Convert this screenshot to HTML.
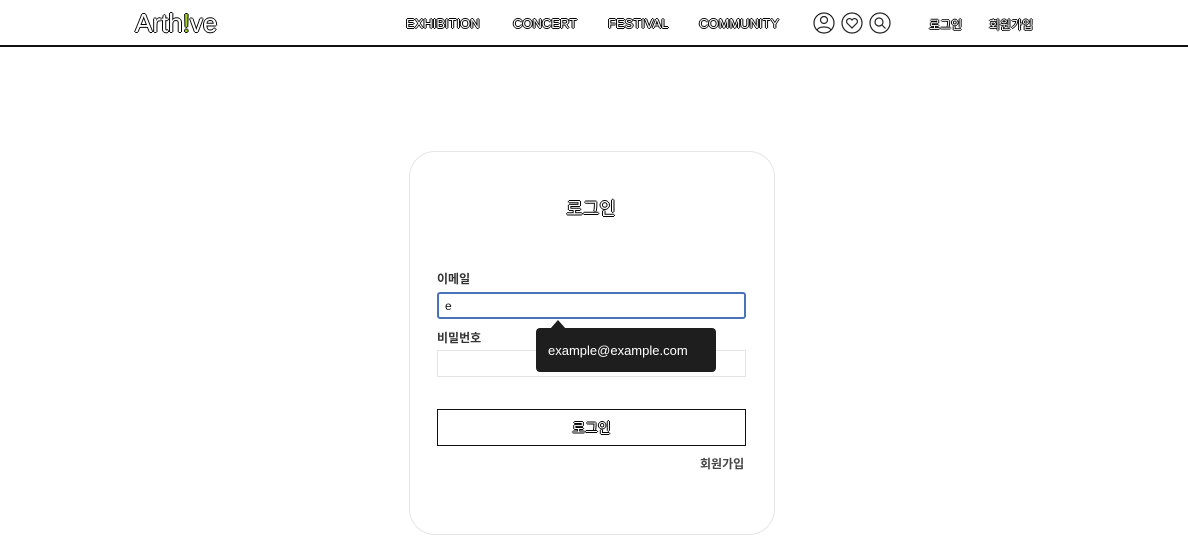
<!DOCTYPE html>
<html><head><meta charset="utf-8"><style>
*{margin:0;padding:0;box-sizing:border-box}
body{width:1188px;height:554px;background:#fff;font-family:"Liberation Sans","Noto Sans CJK KR",sans-serif;position:relative;overflow:hidden}
.ol{color:#fff;text-shadow:-1px 0 #000,1px 0 #000,0 -1px #000,0 1px #000}
.hdr{position:absolute;left:0;top:0;width:1188px;height:47px;border-bottom:2px solid #111}
.abs{position:absolute}
.nav{font-size:13px;font-weight:normal;top:16px}
.card{position:absolute;left:409px;top:151px;width:366px;height:384px;border:1px solid #e6e6e6;border-radius:26px}
.lbl{position:absolute;font-size:12px;font-weight:bold;color:#333}
.inp{position:absolute;left:437px;width:309px;height:27px;border:1px solid #e4e4e4}
</style></head><body>
<div class="hdr"></div>
<div class="abs ol" style="left:135px;top:8px;font-size:26px;font-weight:normal">Arth<span style="color:#a6d619">!</span>ve</div>
<div class="abs nav ol" style="left:406px">EXHIBITION</div>
<div class="abs nav ol" style="left:513px">CONCERT</div>
<div class="abs nav ol" style="left:608px">FESTIVAL</div>
<div class="abs nav ol" style="left:699px">COMMUNITY</div>
<svg class="abs" style="left:813px;top:12px" width="82" height="22" viewBox="0 0 82 22" fill="none" stroke="#222" stroke-width="1.2">
<circle cx="11" cy="11" r="10"/><circle cx="11" cy="8" r="3.5"/><path d="M4 18c2-4 12-4 14 0"/>
<circle cx="39" cy="11" r="10"/><path d="M39 16l-5-5a2.8 2.8 0 0 1 5-3a2.8 2.8 0 0 1 5 3z"/>
<circle cx="67" cy="11" r="10"/><circle cx="66" cy="10" r="4"/><path d="M69 13l3.5 3.5"/>
</svg>
<div class="abs nav ol" style="left:929px;font-size:12px">로그인</div>
<div class="abs nav ol" style="left:989px;font-size:12px">회원가입</div>
<div class="card"></div>
<div class="abs ol" style="left:0;width:1182px;text-align:center;top:195px;font-size:18px">로그인</div>
<div class="lbl" style="left:437px;top:270px">이메일</div>
<div class="inp" style="top:292px;border:2px solid #4a72b8;border-radius:3px;font-size:12px;padding:5px 6px;color:#111">e</div>
<div class="lbl" style="left:437px;top:329px">비밀번호</div>
<div class="inp" style="top:350px"></div>
<div class="abs" style="left:536px;top:328px;width:180px;height:44px;background:#1e1e1e;border-radius:4px;color:#fff;font-size:13px;padding:15px 12px">example@example.com</div>
<div class="abs" style="left:550px;top:320px;width:0;height:0;border-left:8px solid transparent;border-right:8px solid transparent;border-bottom:9px solid #1e1e1e"></div>
<div class="abs" style="left:437px;top:409px;width:309px;height:37px;border:1.5px solid #111"></div>
<div class="abs ol" style="left:437px;width:309px;top:418px;text-align:center;font-size:14px">로그인</div>
<div class="lbl" style="left:700px;top:455px;font-weight:bold;color:#444">회원가입</div>
</body></html>
